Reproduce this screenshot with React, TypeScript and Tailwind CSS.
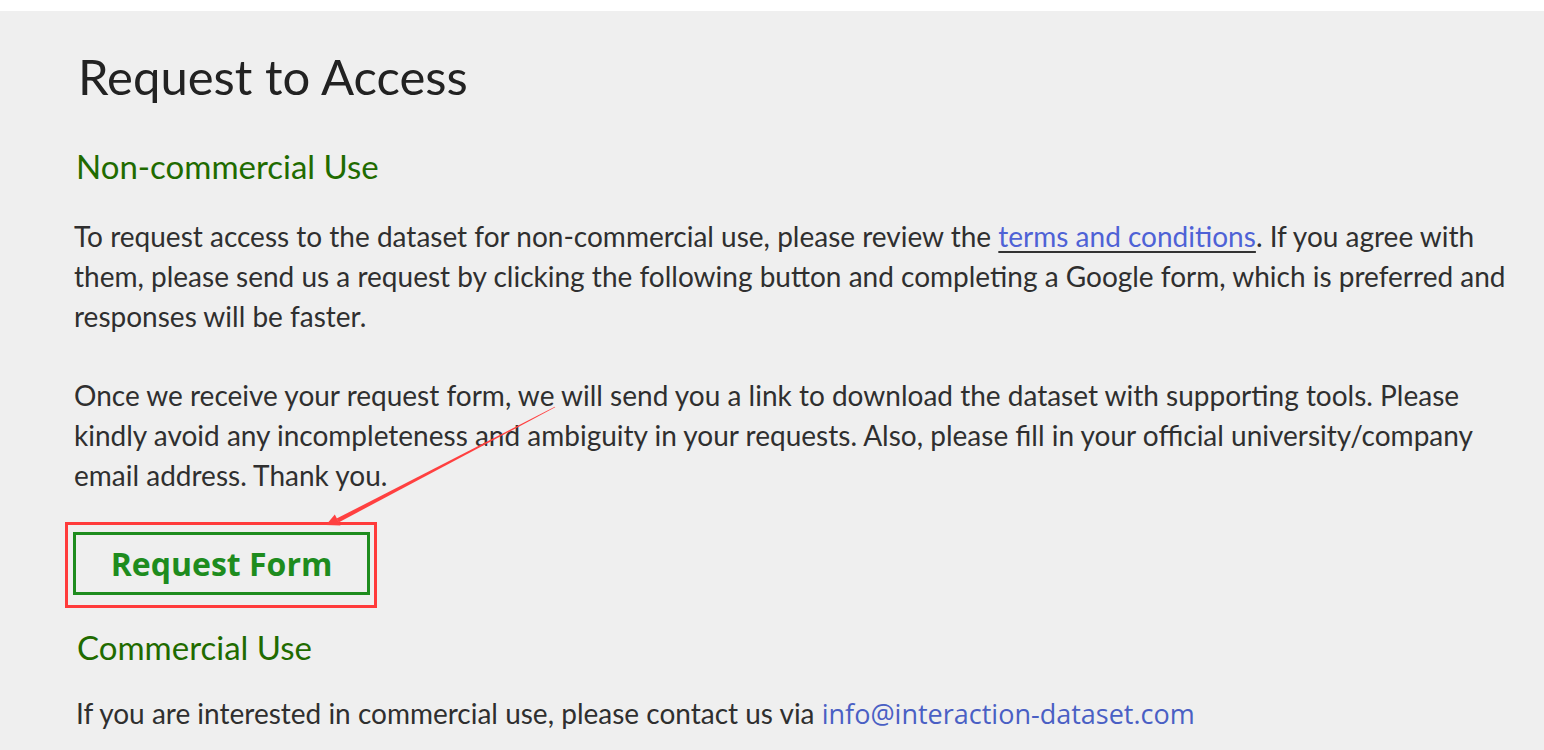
import React from 'react';

const Arrow: React.FC = () => (
  <svg className="pointer-events-none absolute left-0 top-0" width="1544" height="750">
    <polygon points="555.2,407.3 554.8,406.7 336.6,518.6 338.6,522.4" fill="#ff4040" />
    <polygon points="326,525 334.8,514.6 340.6,525.4" fill="#ff4040" />
  </svg>
);

const App: React.FC = () => {
  return (
    <div className="relative h-[750px] w-[1544px] overflow-hidden bg-white">
      <div className="mt-[11px] h-[739px] bg-[#efefef] pl-[74px] text-[#2f2f2f] font-['Lato',sans-serif]">
        <h1 className="pl-1 pt-[33px] text-[49px] leading-[64px] text-[#222]">Request to Access</h1>
        <h2 className="mt-[36px] pl-[2px] text-[33px] leading-[44px] text-[#1f6b00]">Non-commercial Use</h2>
        <p className="mt-[28px] text-[28px] leading-[40px]">
          To request access to the dataset for non-commercial use, please review the{' '}
          <a className="text-[#4e62d6] underline decoration-[#333] underline-offset-4">terms and conditions</a>. If you agree with
          <br />
          them, please send us a request by clicking the following button and completing a Google form, which is preferred and
          <br />
          responses will be faster.
        </p>
        <p className="mt-[39px] text-[28px] leading-[40px]">
          Once we receive your request form, we will send you a link to download the dataset with supporting tools. Please
          <br />
          kindly avoid any incompleteness and ambiguity in your requests. Also, please fill in your official university/company
          <br />
          email address. Thank you.
        </p>
        <div className="ml-[-9px] mt-[27px] inline-block border-[3px] border-[#ff3b3b] pt-[7px] pr-[4px] pb-[10px] pl-[5px]">
          <div className="flex h-[63px] w-[297px] items-center justify-center border-[3px] border-[#1e8c1e]">
            <span className="font-['Open_Sans',sans-serif] text-[32px] font-bold leading-none text-[#1e8c1e]">Request Form</span>
          </div>
        </div>
        <h2 className="mt-[17px] pl-[3px] text-[33px] leading-[44px] text-[#1f6b00]">Commercial Use</h2>
        <p className="mt-[24px] pl-[2px] text-[28px] leading-[40px]">
          If you are interested in commercial use, please contact us via{' '}
          <a className="font-['Open_Sans',sans-serif] text-[27px] text-[#4a5fc4]">info@interaction-dataset.com</a>
        </p>
      </div>
      <Arrow />
    </div>
  );
};

export default App;
